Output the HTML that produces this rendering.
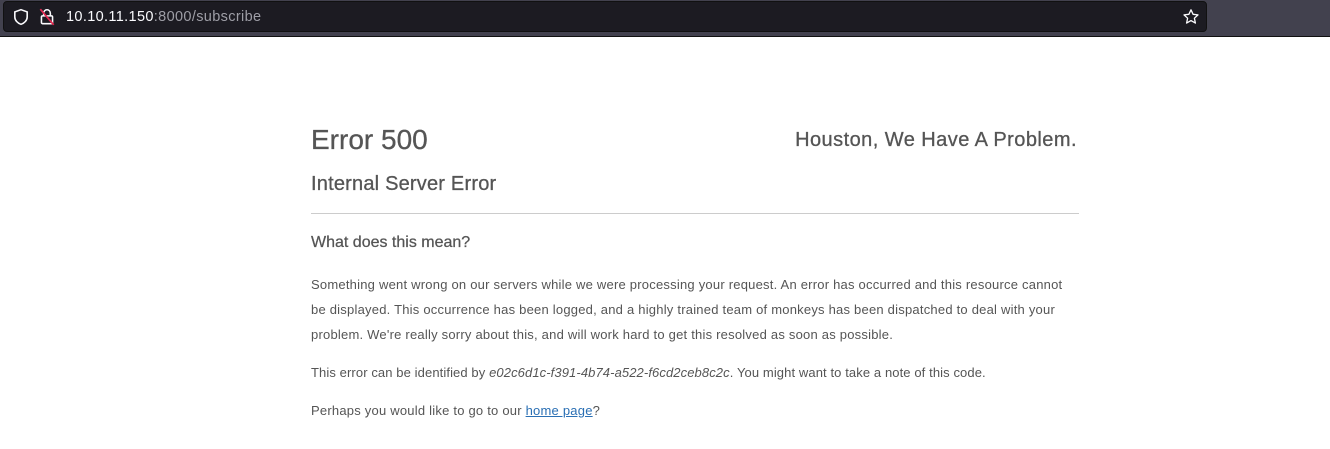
<!DOCTYPE html>
<html><head><meta charset="utf-8"><style>
*{margin:0;padding:0;box-sizing:border-box}
body{width:1330px;height:449px;overflow:hidden;background:#fff;font-family:"Liberation Sans",sans-serif;color:#555}
.bar{position:absolute;left:0;top:0;width:1330px;height:37px;background:#42414e;border-bottom:1px solid #111}
.url{position:absolute;left:3px;top:1px;width:1204px;height:31px;background:#1c1b22;border-radius:4px;border:1px solid #111}
.url .t{position:absolute;left:62px;top:7px;font-size:14.5px;color:#fbfbfe;letter-spacing:0.35px}
.url .t span{color:#9e9ea6}
.c{position:absolute;left:311px;width:768px}
.p{font-size:13px;line-height:25px;letter-spacing:0.22px;color:#555}
a{color:#2a6fb4;text-decoration:underline}
</style></head><body>
<div class="bar"><div class="url">
<svg style="position:absolute;left:8px;top:6px" width="18" height="18" viewBox="0 0 16 16"><path d="M8 1.5 L13.5 3.5 V8 C13.5 11 11 13.5 8 14.5 C5 13.5 2.5 11 2.5 8 V3.5 Z" fill="none" stroke="#fbfbfe" stroke-width="1.4"/></svg>
<svg style="position:absolute;left:34px;top:5px" width="18" height="20" viewBox="0 0 16 18"><path d="M5 8 V5.5 A3 3 0 0 1 11 5.5 V8" fill="none" stroke="#fbfbfe" stroke-width="1.4"/><rect x="3" y="8" width="10" height="7" rx="1" fill="none" stroke="#fbfbfe" stroke-width="1.4"/><path d="M2 2 L14 16" stroke="#e22850" stroke-width="1.6"/></svg>
<div class="t">10.10.11.150<span>:8000/subscribe</span></div>
<svg style="position:absolute;left:1178px;top:6px" width="18" height="18" viewBox="0 0 18 18"><path d="M9 1.8 L11.1 6.3 L16 6.9 L12.4 10.2 L13.4 15.1 L9 12.6 L4.6 15.1 L5.6 10.2 L2 6.9 L6.9 6.3 Z" fill="none" stroke="#fbfbfe" stroke-width="1.3" stroke-linejoin="round"/></svg>
</div></div>
<div class="c" style="top:124px;font-size:28px;color:#555;-webkit-text-stroke:0.3px #555">Error 500</div>
<div class="c" style="top:129px;font-size:20px;letter-spacing:0.45px;text-align:right;padding-right:2px;color:#555;-webkit-text-stroke:0.3px #555">Houston, We Have A Problem.</div>
<div class="c" style="top:173px;font-size:20px;letter-spacing:0.2px;color:#555;-webkit-text-stroke:0.3px #555">Internal Server Error</div>
<div class="c" style="top:213px;height:1px;background:#ccc"></div>
<div class="c" style="top:234px;font-size:16px;color:#555;-webkit-text-stroke:0.25px #555">What does this mean?</div>
<div class="c p" style="top:272px">Something went wrong on our servers while we were processing your request. An error has occurred and this resource cannot be displayed. This occurrence has been logged, and a highly trained team of monkeys has been dispatched to deal with your problem. We're really sorry about this, and will work hard to get this resolved as soon as possible.</div>
<div class="c p" style="top:360px;letter-spacing:0.1px">This error can be identified by <i>e02c6d1c-f391-4b74-a522-f6cd2ceb8c2c</i>. You might want to take a note of this code.</div>
<div class="c p" style="top:398px">Perhaps you would like to go to our <a>home page</a>?</div>
</body></html>
